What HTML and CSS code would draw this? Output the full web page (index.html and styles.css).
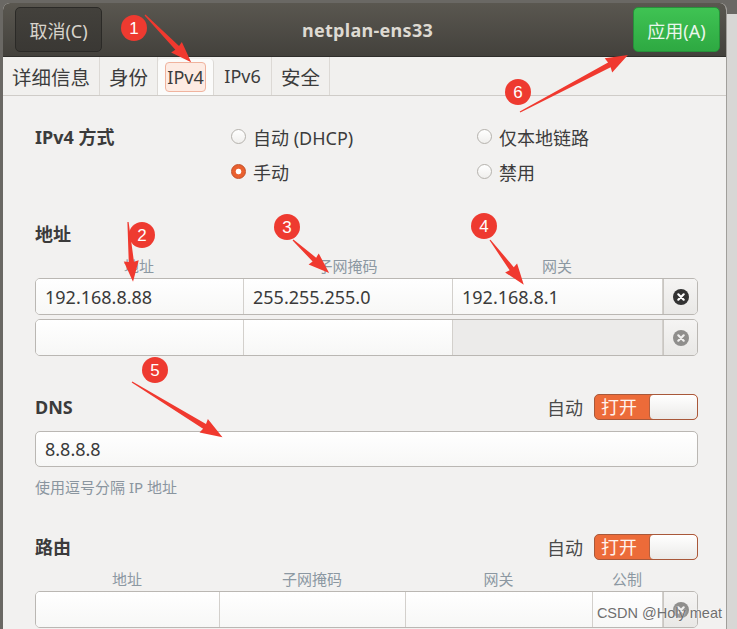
FILE: index.html
```html
<!DOCTYPE html>
<html lang="zh-CN">
<head>
  <meta charset="UTF-8">
  <title>netplan-ens33</title>
  <link rel="stylesheet" href="styles.css">
</head>
<body>
  <div class="edge"></div>

  <div class="window">
    <div class="headerbar">
      <button class="hbtn cancel">取消(C)</button>
      <div class="title">netplan-ens33</div>
      <button class="hbtn apply">应用(A)</button>
    </div>

    <div class="tabs">
      <div class="tab t1">详细信息</div>
      <div class="tab t2">身份</div>
      <div class="tab active"><span class="focus">IPv4</span></div>
      <div class="tab t4">IPv6</div>
      <div class="tab t5">安全</div>
    </div>

    <div class="content">
      <div class="method">
        <div class="heading">IPv4 方式</div>
        <label class="radio"><span class="dot"></span>自动 (DHCP)</label>
        <label class="radio"><span class="dot"></span>仅本地链路</label>
        <div></div>
        <label class="radio"><span class="dot checked"></span>手动</label>
        <label class="radio"><span class="dot"></span>禁用</label>
      </div>

      <div class="heading section">地址</div>
      <div class="cols addr">
        <div>地址</div><div>子网掩码</div><div>网关</div><div></div>
      </div>
      <div class="row addr">
        <div class="cell">192.168.8.88</div>
        <div class="cell">255.255.255.0</div>
        <div class="cell">192.168.8.1</div>
        <div class="cell del">
          <svg width="16" height="16" viewBox="0 0 16 16"><circle cx="8" cy="8" r="8" fill="#323232"/><path d="M5.3 5.3 10.7 10.7M10.7 5.3 5.3 10.7" stroke="#fff" stroke-width="2.2" stroke-linecap="round"/></svg>
        </div>
      </div>
      <div class="row addr second">
        <div class="cell"></div>
        <div class="cell"></div>
        <div class="cell off"></div>
        <div class="cell del">
          <svg width="16" height="16" viewBox="0 0 16 16"><circle cx="8" cy="8" r="8" fill="#8f8e8c"/><path d="M5.3 5.3 10.7 10.7M10.7 5.3 5.3 10.7" stroke="#f0efee" stroke-width="2.2" stroke-linecap="round"/></svg>
        </div>
      </div>

      <div class="bar dns">
        <div class="heading">DNS</div>
        <span class="auto">自动</span>
        <div class="switch"><span class="on">打开</span><span class="knob"></span></div>
      </div>
      <div class="entry">8.8.8.8</div>
      <div class="hint">使用逗号分隔 IP 地址</div>

      <div class="bar route">
        <div class="heading">路由</div>
        <span class="auto">自动</span>
        <div class="switch"><span class="on">打开</span><span class="knob"></span></div>
      </div>
      <div class="cols rt">
        <div>地址</div><div>子网掩码</div><div>网关</div><div>公制</div><div></div>
      </div>
      <div class="row rt">
        <div class="cell"></div>
        <div class="cell"></div>
        <div class="cell"></div>
        <div class="cell"></div>
        <div class="cell del">
          <svg width="16" height="16" viewBox="0 0 16 16"><circle cx="8" cy="8" r="8" fill="#8f8e8c"/><path d="M5.3 5.3 10.7 10.7M10.7 5.3 5.3 10.7" stroke="#f0efee" stroke-width="2.2" stroke-linecap="round"/></svg>
        </div>
      </div>
    </div>
  </div>

  <div class="desktop"></div>

  <!-- red markup drawn over the screenshot -->
  <svg class="marks" width="737" height="629" viewBox="0 0 737 629">
    <g fill="#f0392f">
      <polygon transform="translate(145 15) rotate(45.6)" points="0,-0.6 46,-2.6 45,-7.5 66,0 45,7.5 46,2.6 0,0.6"/>
      <polygon transform="translate(128 222) rotate(85.2)" points="0,-0.6 40,-2.6 39,-7.5 60,0 39,7.5 40,2.6 0,0.6"/>
      <polygon transform="translate(293 240) rotate(42.5)" points="0,-0.6 29,-2.6 28,-7.5 49,0 28,7.5 29,2.6 0,0.6"/>
      <polygon transform="translate(490 240) rotate(52.9)" points="0,-0.6 36,-2.6 35,-7.5 56,0 35,7.5 36,2.6 0,0.6"/>
      <polygon transform="translate(132 382) rotate(31.4)" points="0,-0.6 85,-2.8 84,-8 106,0 84,8 85,2.8 0,0.6"/>
      <polygon transform="translate(520 112) rotate(-27.8)" points="0,-0.6 101,-2.8 100,-8 122,0 100,8 101,2.8 0,0.6"/>
    </g>
    <g class="badge">
      <circle cx="134" cy="28" r="13"/><text x="134" y="34">1</text>
      <circle cx="142" cy="235" r="13"/><text x="142" y="241">2</text>
      <circle cx="287" cy="227" r="13"/><text x="287" y="233">3</text>
      <circle cx="484" cy="226" r="13"/><text x="484" y="232">4</text>
      <circle cx="155" cy="370" r="13"/><text x="155" y="376">5</text>
      <circle cx="518" cy="92" r="13"/><text x="518" y="98">6</text>
    </g>
  </svg>

  <div class="watermark">CSDN @Holy meat</div>
</body>
</html>
```

FILE: styles.css
```css
body {
  margin: 0;
  height: 629px;
  overflow: hidden;
  display: flex;
  background: #6a6864;
  font-family: "Noto Sans", "Noto Sans CJK SC", sans-serif;
  font-size: 18px;
  color: #3c3c3c;
  position: relative;
}
.edge {
  width: 3px;
  flex: none;
}
.window {
  width: 723px;
  flex: none;
  margin-top: 3px;
  background: #f2f1f0;
  border-radius: 7px 7px 0 0;
  border-right: 1px solid #a19f9b;
  overflow: hidden;
}
.desktop {
  flex: 1;
  margin-top: 14px;
  background: #d8d7d5;
}

/* header bar */
.headerbar {
  height: 54px;
  display: flex;
  align-items: center;
  padding: 0 6px 0 12px;
  background: linear-gradient(#5a5750, #43413c);
  border-bottom: 1px solid #2f2e2b;
  box-sizing: border-box;
}
.hbtn {
  width: 87px;
  height: 45px;
  border-radius: 5px;
  font-family: inherit;
  font-size: 18px;
  padding: 0;
}
.cancel {
  background: linear-gradient(#43413c, #3a3834);
  border: 1px solid #2b2a27;
  color: #d8d4cc;
}
.apply {
  background: linear-gradient(#3fc353, #2ea942);
  border: 1px solid #26913a;
  color: #eaf6ec;
}
.title {
  flex: 1;
  text-align: center;
  font-weight: bold;
  color: #dedad2;
  letter-spacing: 0.3px;
}

/* notebook tabs */
.tabs {
  height: 39px;
  display: flex;
  background: #f1f0ee;
  border-bottom: 1px solid #cfccc8;
  box-sizing: border-box;
}
.tab {
  display: flex;
  align-items: center;
  justify-content: center;
  border-right: 1px solid #dcd9d5;
  color: #3c3c3c;
  font-size: 19.5px;
  box-sizing: border-box;
}
.t1 { width: 97px; }
.t2 { width: 58px; }
.t4 { width: 58px; font-size: 18px; }
.t5 { width: 58px; }
.tab.active {
  width: 56px;
  font-size: 18px;
  background: #fbfbfa;
  margin-top: 2px;
  border-radius: 4px 4px 0 0;
}
.focus {
  padding: 2px 1px;
  border: 1px solid #f0b39e;
  border-radius: 4px;
  background: #fdebe3;
}

/* page */
.content {
  padding: 23px 28px 0 32px;
}
.heading {
  font-weight: bold;
  color: #3b3b3b;
  line-height: 24px;
}
.method {
  display: grid;
  grid-template-columns: 196px 246px 1fr;
  grid-auto-rows: 35px;
  align-items: center;
}
.radio {
  display: flex;
  align-items: center;
  gap: 7px;
  color: #3c3c3c;
}
.dot {
  width: 13px;
  height: 13px;
  border-radius: 50%;
  border: 1px solid #b5b2ad;
  background: linear-gradient(#ffffff, #f0efed);
  box-sizing: content-box;
}
.dot.checked {
  border-color: #c24d26;
  background: radial-gradient(circle, #ffffff 0 2.5px, #e9602f 3.2px);
}
.section {
  margin-top: 33px;
}

/* grids of entries */
.cols {
  display: grid;
  margin-top: 10px;
  line-height: 20px;
  font-size: 15px;
  color: #8c98a2;
  text-align: center;
}
.row {
  display: grid;
  height: 37px;
  margin-top: 2px;
  border: 1px solid #bab7b3;
  border-radius: 5px;
  overflow: hidden;
  box-sizing: border-box;
}
.row.second {
  margin-top: 4px;
}
.addr {
  grid-template-columns: 208px 209px 210px 1fr;
}
.rt {
  grid-template-columns: 184px 186px 187px 70px 1fr;
}
.cell {
  display: flex;
  align-items: center;
  padding: 0 9px;
  background: linear-gradient(#ffffff, #f7f7f6);
  border-right: 1px solid #d3d0cc;
  color: #3a3a3a;
}
.cell.off {
  background: #ecebea;
}
.cell.del {
  border-right: none;
  justify-content: center;
  padding: 0;
  background: linear-gradient(#f5f4f3, #e9e8e6);
  border-left: 1px solid #c9c6c2;
}

.bar {
  height: 26px;
  display: flex;
  align-items: center;
}
.bar .heading {
  flex: 1;
}
.dns {
  margin-top: 38px;
}
.route {
  margin-top: 37px;
}
.route + .cols {
  margin-top: 9px;
}
.auto {
  color: #4a4a4a;
  margin-right: 11px;
}
.switch {
  width: 104px;
  height: 26px;
  display: flex;
  border: 1px solid #a8583a;
  border-radius: 5px;
  overflow: hidden;
  box-sizing: border-box;
  background: #ec6b39;
}
.switch .on {
  width: 54px;
  color: #fff3ee;
  line-height: 24px;
  padding-left: 6px;
  box-sizing: border-box;
}
.switch .knob {
  flex: 1;
  background: linear-gradient(#ffffff, #ebeae8);
  border-left: 1px solid #b5603f;
  border-radius: 4px;
}
.entry {
  height: 36px;
  margin-top: 11px;
  display: flex;
  align-items: center;
  padding: 0 9px;
  border: 1px solid #bab7b3;
  border-radius: 5px;
  background: linear-gradient(#ffffff, #f7f7f6);
  color: #3a3a3a;
  box-sizing: border-box;
}
.hint {
  margin-top: 10px;
  line-height: 20px;
  font-size: 15px;
  color: #8a959f;
}

/* overlays */
.marks {
  position: absolute;
  top: 0;
  left: 0;
  pointer-events: none;
}
.badge circle {
  fill: #ee3a30;
}
.badge text {
  fill: #ffffff;
  font-family: "Liberation Sans", sans-serif;
  font-size: 17px;
  text-anchor: middle;
}
.watermark {
  position: absolute;
  right: 15px;
  bottom: 8px;
  font-family: "Liberation Sans", sans-serif;
  font-size: 14.5px;
  color: #6f6f6f;
  text-shadow: 0 0 2px #ffffff;
}
```
